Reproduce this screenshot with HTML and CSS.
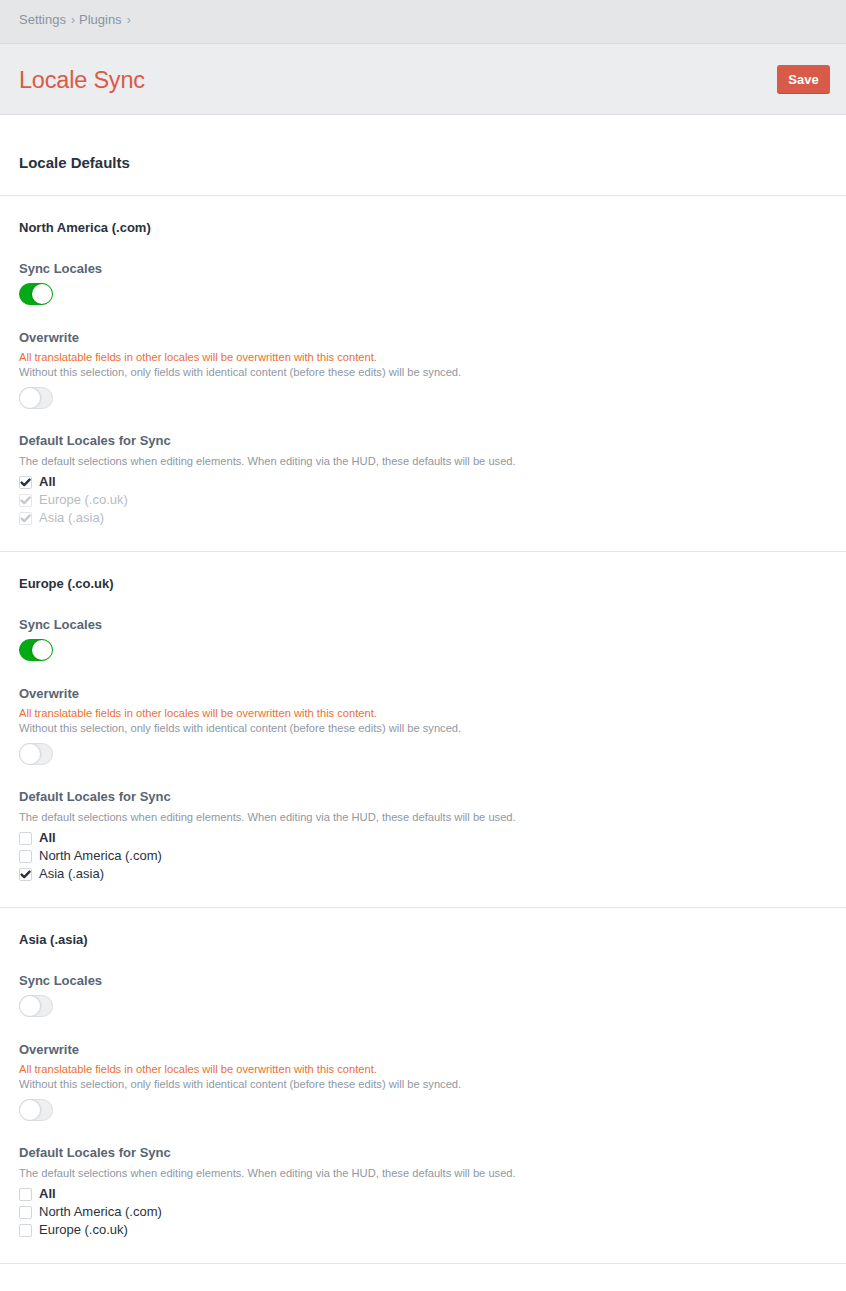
FILE: index.html
```html
<!DOCTYPE html>
<html lang="en">
<head>
<meta charset="utf-8">
<title>Locale Sync</title>
<link rel="stylesheet" href="styles.css">
</head>
<body>
<header class="crumbs">
  <a class="crumb">Settings</a><span class="sep">›</span><a class="crumb">Plugins</a><span class="sep">›</span>
</header>
<div class="titlebar">
  <h1 class="title">Locale Sync</h1>
  <button class="btn-save">Save</button>
</div>
<main class="content">
  <div class="pane-head">Locale Defaults</div>

  <section class="locale">
    <h2 class="locale-name">North America (.com)</h2>
    <div class="field f-sync">
      <div class="label">Sync Locales</div>
      <div class="toggle on t-sync"><span class="knob"></span></div>
    </div>
    <div class="field f-over">
      <div class="label">Overwrite</div>
      <div class="instr"><div class="warn">All translatable fields in other locales will be overwritten with this content.</div><div>Without this selection, only fields with identical content (before these edits) will be synced.</div></div>
      <div class="toggle t-over"><span class="knob"></span></div>
    </div>
    <div class="field f-def">
      <div class="label">Default Locales for Sync</div>
      <div class="instr">The default selections when editing elements. When editing via the HUD, these defaults will be used.</div>
      <ul class="checks">
        <li class="check checked"><span class="box"><svg viewBox="0 0 13 13"><path d="M2.6 6.6 L5.2 9.1 L10.6 3.6"/></svg></span><span class="all">All</span></li>
        <li class="check checked disabled"><span class="box"><svg viewBox="0 0 13 13"><path d="M2.6 6.6 L5.2 9.1 L10.6 3.6"/></svg></span><span>Europe (.co.uk)</span></li>
        <li class="check checked disabled"><span class="box"><svg viewBox="0 0 13 13"><path d="M2.6 6.6 L5.2 9.1 L10.6 3.6"/></svg></span><span>Asia (.asia)</span></li>
      </ul>
    </div>
  </section>

  <section class="locale">
    <h2 class="locale-name">Europe (.co.uk)</h2>
    <div class="field f-sync">
      <div class="label">Sync Locales</div>
      <div class="toggle on t-sync"><span class="knob"></span></div>
    </div>
    <div class="field f-over">
      <div class="label">Overwrite</div>
      <div class="instr"><div class="warn">All translatable fields in other locales will be overwritten with this content.</div><div>Without this selection, only fields with identical content (before these edits) will be synced.</div></div>
      <div class="toggle t-over"><span class="knob"></span></div>
    </div>
    <div class="field f-def">
      <div class="label">Default Locales for Sync</div>
      <div class="instr">The default selections when editing elements. When editing via the HUD, these defaults will be used.</div>
      <ul class="checks">
        <li class="check"><span class="box"></span><span class="all">All</span></li>
        <li class="check"><span class="box"></span><span>North America (.com)</span></li>
        <li class="check checked"><span class="box"><svg viewBox="0 0 13 13"><path d="M2.6 6.6 L5.2 9.1 L10.6 3.6"/></svg></span><span>Asia (.asia)</span></li>
      </ul>
    </div>
  </section>

  <section class="locale">
    <h2 class="locale-name">Asia (.asia)</h2>
    <div class="field f-sync">
      <div class="label">Sync Locales</div>
      <div class="toggle t-sync"><span class="knob"></span></div>
    </div>
    <div class="field f-over">
      <div class="label">Overwrite</div>
      <div class="instr"><div class="warn">All translatable fields in other locales will be overwritten with this content.</div><div>Without this selection, only fields with identical content (before these edits) will be synced.</div></div>
      <div class="toggle t-over"><span class="knob"></span></div>
    </div>
    <div class="field f-def">
      <div class="label">Default Locales for Sync</div>
      <div class="instr">The default selections when editing elements. When editing via the HUD, these defaults will be used.</div>
      <ul class="checks">
        <li class="check"><span class="box"></span><span class="all">All</span></li>
        <li class="check"><span class="box"></span><span>North America (.com)</span></li>
        <li class="check"><span class="box"></span><span>Europe (.co.uk)</span></li>
      </ul>
    </div>
  </section>
</main>
</body>
</html>
```

FILE: styles.css
```css
* { box-sizing: border-box; }
html, body { margin: 0; padding: 0; background: #fff; }
body {
  font-family: "Liberation Sans", Arial, Helvetica, sans-serif;
  font-size: 13px;
  color: #29323d;
  -webkit-font-smoothing: antialiased;
}

.crumbs {
  height: 44px;
  background: #e4e6e8;
  border-bottom: 1px solid #d7d9dc;
  padding: 11px 0 0 19px;
  line-height: 17px;
  font-size: 13px;
  color: #8a949f;
}
.crumb { color: #8a949f; }
.sep { display: inline-block; margin: 0 4px 0 5px; font-size: 12px; color: #9aa3ac; }

.titlebar {
  height: 71px;
  background: #ebedef;
  border-bottom: 1px solid #dcdee1;
  display: flex;
  align-items: center;
  justify-content: space-between;
  padding: 1px 16px 0 19px;
}
.title {
  margin: 0;
  font-size: 23.5px;
  font-weight: normal;
  color: #da5a47;
  line-height: 30px;
  letter-spacing: -0.2px;
}
.btn-save {
  height: 29px;
  width: 53px;
  border: none;
  border-radius: 3px;
  background: #d85a48;
  color: #fff;
  font-family: inherit;
  font-weight: bold;
  font-size: 13px;
  padding: 0;
  margin-top: -1px;
  box-shadow: inset 0 -1px 0 rgba(0,0,0,0.12);
}

.pane-head {
  padding: 39px 19px 23px;
  line-height: 18px;
  font-size: 15px;
  font-weight: bold;
  color: #29323d;
  border-bottom: 1px solid #e3e5e8;
}

.locale {
  padding: 23px 19px 24px;
  border-bottom: 1px solid #e3e5e8;
}
.locale-name {
  margin: 0;
  font-size: 13px;
  font-weight: bold;
  line-height: 18px;
  color: #29323d;
}

.field { margin-top: 23px; }
.f-over { margin-top: 24px; }
.label {
  font-weight: bold;
  font-size: 13px;
  line-height: 18px;
  color: #576575;
}
.instr {
  margin-top: 3px;
  font-size: 11.15px;
  line-height: 15px;
  color: #8f98a3;
}
.f-def .instr { margin-top: 4px; }
.warn { color: #ec6f32; }

.toggle {
  position: relative;
  width: 34px;
  height: 22px;
  border-radius: 11px;
  background: #eeeff0;
  border: 1px solid #dcdee0;
}
.t-sync { margin-top: 5px; }
.t-over { margin-top: 7px; }
.toggle .knob {
  position: absolute;
  top: 0;
  left: 0;
  width: 20px;
  height: 20px;
  border-radius: 50%;
  background: #fff;
  box-shadow: 0 0 0 1px #d9dbde, 1px 0 2px rgba(0,0,0,0.12);
}
.toggle.on {
  background: #05a815;
  border-color: #05a815;
}
.toggle.on .knob {
  left: auto;
  right: 0;
  box-shadow: -1px 0 2px rgba(0,0,0,0.15);
}

.checks {
  list-style: none;
  margin: 4px 0 0;
  padding: 0;
}
.check {
  display: flex;
  align-items: center;
  height: 18px;
  line-height: 18px;
  color: #29323d;
}
.check .all { font-weight: bold; }
.box {
  width: 13px;
  height: 13px;
  margin-right: 7px;
  border: 1px solid #d2d6da;
  border-radius: 2px;
  background: #fff;
  display: inline-flex;
  flex: none;
}
.box svg {
  width: 13px;
  height: 13px;
  margin: -1px;
  overflow: visible;
}
.box svg path {
  fill: none;
  stroke: #29323d;
  stroke-width: 2.4;
  stroke-linecap: round;
  stroke-linejoin: round;
}
.check.disabled { color: #b7bcc2; }
.check.disabled .box { border-color: #e3e5e8; }
.check.disabled .box svg path { stroke: #c5c9cd; }
```
